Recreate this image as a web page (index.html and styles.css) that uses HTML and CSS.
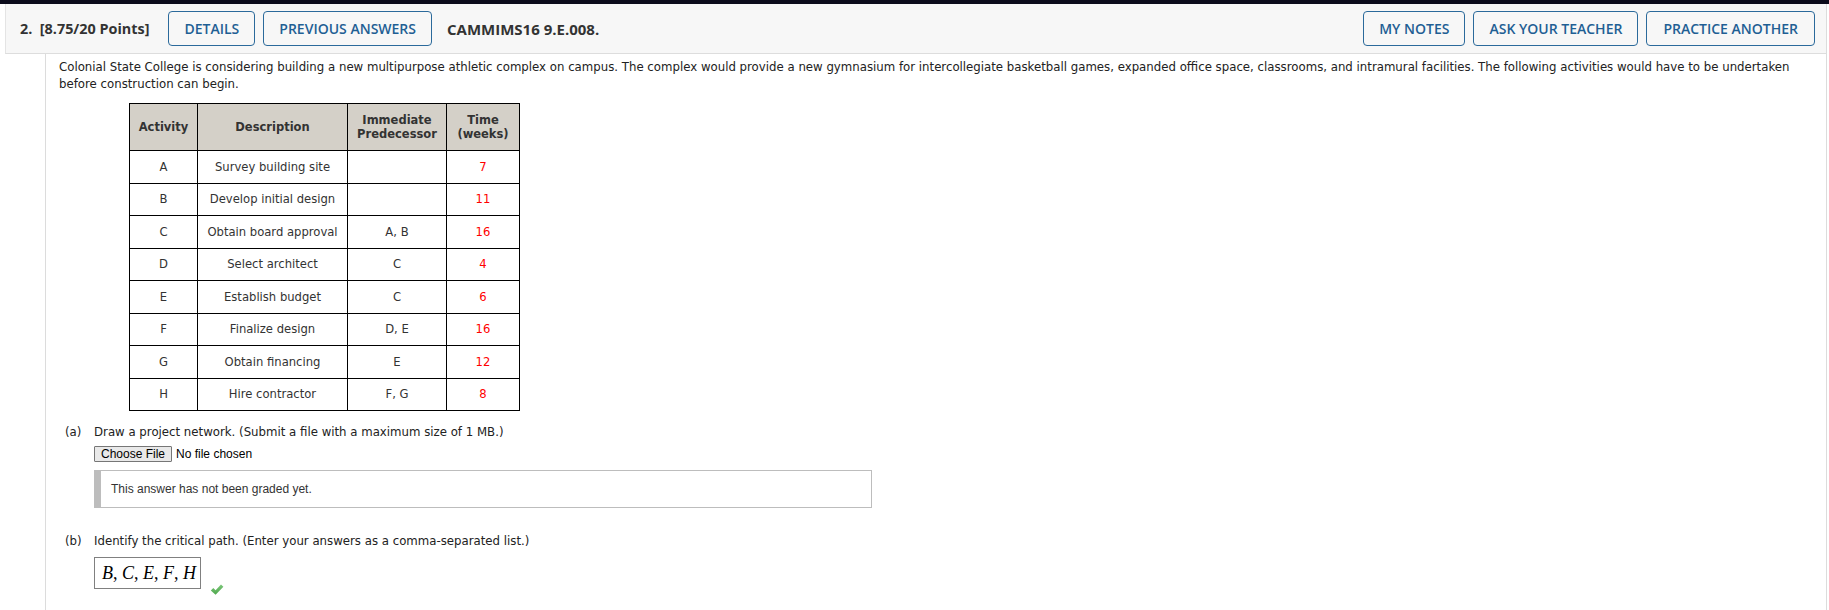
FILE: index.html
```html
<!DOCTYPE html>
<html>
<head>
<meta charset="utf-8">
<link rel="stylesheet" href="styles.css">
</head>
<body>
<div class="topbar"></div>
<div class="question">
  <div class="qhead">
    <div class="qhead-left">
      <span class="qnum">2.&nbsp; [8.75/20 Points]</span>
      <span class="btn">DETAILS</span>
      <span class="btn">PREVIOUS ANSWERS</span>
      <span class="qcode">CAMMIMS16 9.E.008.</span>
    </div>
    <div class="qhead-right">
      <span class="btn">MY NOTES</span>
      <span class="btn">ASK YOUR TEACHER</span>
      <span class="btn btn-wide">PRACTICE ANOTHER</span>
    </div>
  </div>
  <div class="qbody">
    <p class="intro">Colonial State College is considering building a new multipurpose athletic complex on campus. The complex would provide a new gymnasium for intercollegiate basketball games, expanded office space, classrooms, and intramural facilities. The following activities would have to be undertaken before construction can begin.</p>
    <table class="acts">
      <thead>
        <tr>
          <th class="c1">Activity</th>
          <th class="c2">Description</th>
          <th class="c3">Immediate<br>Predecessor</th>
          <th class="c4">Time<br>(weeks)</th>
        </tr>
      </thead>
      <tbody>
        <tr><td>A</td><td>Survey building site</td><td></td><td class="t">7</td></tr>
        <tr><td>B</td><td>Develop initial design</td><td></td><td class="t">11</td></tr>
        <tr><td>C</td><td>Obtain board approval</td><td>A, B</td><td class="t">16</td></tr>
        <tr><td>D</td><td>Select architect</td><td>C</td><td class="t">4</td></tr>
        <tr><td>E</td><td>Establish budget</td><td>C</td><td class="t">6</td></tr>
        <tr><td>F</td><td>Finalize design</td><td>D, E</td><td class="t">16</td></tr>
        <tr><td>G</td><td>Obtain financing</td><td>E</td><td class="t">12</td></tr>
        <tr><td>H</td><td>Hire contractor</td><td>F, G</td><td class="t">8</td></tr>
      </tbody>
    </table>

    <div class="part part-a">
      <span class="plabel">(a)</span>
      <div class="pmain">
        <div class="ptext">Draw a project network. (Submit a file with a maximum size of 1 MB.)</div>
        <div class="fileline"><span class="filebtn">Choose File</span><span class="nofile">No file chosen</span></div>
        <div class="graded">This answer has not been graded yet.</div>
      </div>
    </div>

    <div class="part part-b">
      <span class="plabel">(b)</span>
      <div class="pmain">
        <div class="ptext">Identify the critical path. (Enter your answers as a comma-separated list.)</div>
        <div class="ansline">
          <div class="ansbox"><span class="math"><i>B</i>, <i>C</i>, <i>E</i>, <i>F</i>, <i>H</i></span></div>
          <svg class="check" width="14" height="13" viewBox="0 0 14 13"><defs><linearGradient id="cg" x1="0" y1="0" x2="0" y2="1"><stop offset="0" stop-color="#7cc67a"/><stop offset="1" stop-color="#4fa84d"/></linearGradient></defs><path d="M0.8 7.4 L3.3 4.9 L5.6 7.2 L11 1.4 L13.4 3.8 L5.6 11.8 Z" fill="url(#cg)"/></svg>
        </div>
      </div>
    </div>
  </div>
</div>
</body>
</html>
```

FILE: styles.css
```css
html, body {
  margin: 0;
  padding: 0;
  background: #ffffff;
}
.topbar {
  height: 4px;
  background: #0c0c1c;
}
.question {
  margin-left: 5px;
  width: 1822px;
  border-right: 1px solid #dcdcdc;
  box-sizing: border-box;
  height: 606px;
  display: flex;
  flex-direction: column;
}
.qhead {
  height: 50px;
  box-sizing: border-box;
  background: #f7f7f7;
  border-bottom: 1px solid #dddddd;
  border-left: 1px solid #e4e4e4;
  display: flex;
  align-items: center;
  justify-content: space-between;
  padding-left: 14px;
  padding-right: 11px;
  font-family: "Open Sans", "Liberation Sans", sans-serif;
  font-size: 14px;
}
.qhead-left, .qhead-right {
  display: flex;
  align-items: center;
  gap: 8px;
}
.qnum {
  font-weight: 700;
  font-size: 14.4px;
  color: #333333;
  margin-right: 11px;
}
.qcode {
  font-weight: 700;
  font-size: 15px;
  color: #333333;
  margin-left: 7px;
}
.btn {
  display: inline-flex;
  align-items: center;
  justify-content: center;
  height: 35px;
  box-sizing: border-box;
  padding: 0 15px;
  border: 1px solid #2b6a9b;
  border-radius: 4px;
  color: #1f5f94;
  background: #f7f7f7;
  font-weight: 600;
  font-size: 14px;
}
.btn-wide {
  padding: 0 16px;
}
.qbody {
  flex: 1;
  margin-left: 40px;
  border-left: 1px solid #dcdcdc;
  padding-left: 13px;
  font-family: "DejaVu Sans", Verdana, sans-serif;
  font-size: 11.75px;
  color: #222222;
}
.intro {
  margin: 5px 0 0 0;
  line-height: 17px;
  width: 1750px;
}
.acts {
  margin: 10px 0 0 70px;
  border-collapse: collapse;
  border: 1px solid #000000;
  font-family: "DejaVu Sans", Verdana, sans-serif;
  color: #333333;
}
.acts th, .acts td {
  border: 1px solid #000000;
  text-align: center;
  padding: 0;
}
.acts th {
  background: #d4d0c8;
  font-weight: bold;
  font-size: 11.5px;
  line-height: 14px;
  height: 46px;
}
.acts td {
  font-size: 11.6px;
  height: 31.5px;
}
.c1 { width: 67px; }
.c2 { width: 149px; }
.c3 { width: 98px; }
.c4 { width: 72px; }
.acts td.t {
  color: #ff0000;
}
.part {
  display: flex;
  padding-left: 6px;
}
.part-a {
  margin-top: 13px;
}
.part-b {
  margin-top: 25px;
}
.plabel {
  width: 29px;
  flex: none;
  line-height: 17px;
}
.pmain {
  display: flex;
  flex-direction: column;
}
.ptext {
  line-height: 17px;
}
.fileline {
  display: flex;
  align-items: center;
  margin-top: 5px;
  font-family: "Liberation Sans", Arial, sans-serif;
  font-size: 12px;
  color: #000000;
}
.filebtn {
  display: inline-block;
  height: 16px;
  line-height: 14px;
  box-sizing: border-box;
  padding: 0 6px;
  background: #e9e9e9;
  border: 1px solid #767676;
  border-radius: 1px;
  color: #000;
}
.nofile {
  margin-left: 4px;
}
.graded {
  margin-top: 8px;
  width: 778px;
  height: 38px;
  box-sizing: border-box;
  border: 1px solid #bdbdbd;
  border-left: 7px solid #bdbdbd;
  padding-left: 10px;
  display: flex;
  align-items: center;
  font-family: "Liberation Sans", Arial, sans-serif;
  font-size: 12px;
  color: #333333;
}
.ansline {
  display: flex;
  align-items: flex-start;
  margin-top: 7px;
}
.ansbox {
  width: 107px;
  height: 32px;
  box-sizing: border-box;
  border: 1px solid #808080;
  display: flex;
  align-items: center;
  padding-left: 7px;
  font-family: "Liberation Serif", "Times New Roman", serif;
  font-size: 18px;
  color: #000000;
  white-space: nowrap;
}
.ansbox i {
  font-style: italic;
}
.check {
  margin-left: 9px;
  margin-top: 26px;
}
```
